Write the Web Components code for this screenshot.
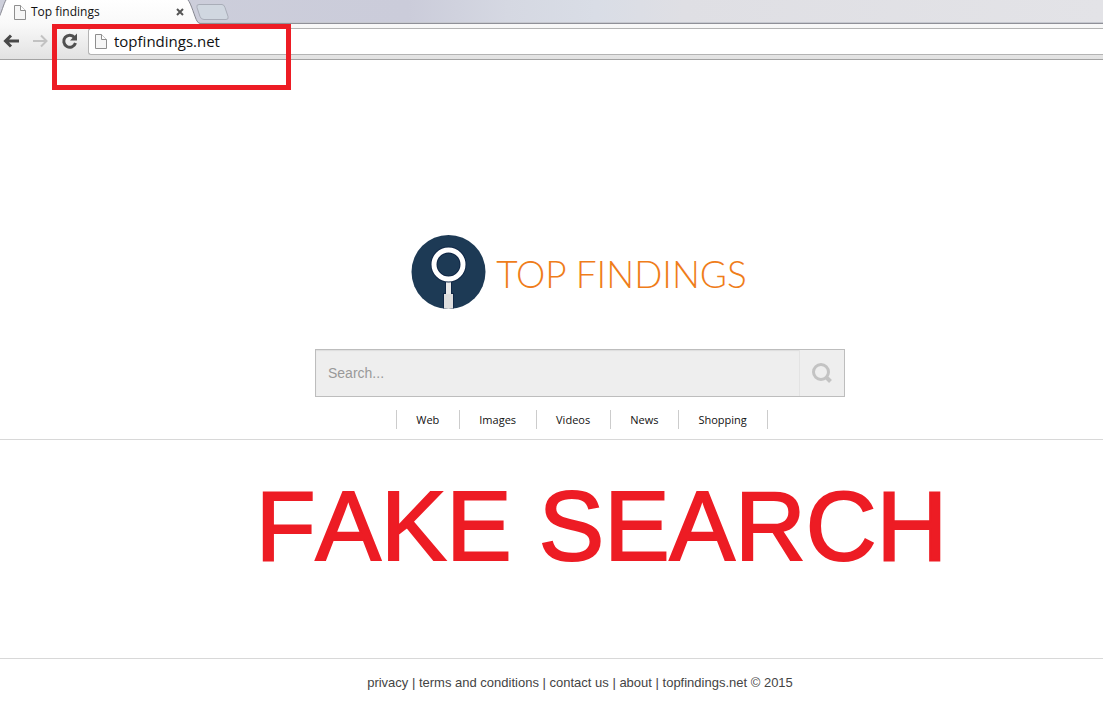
<!DOCTYPE html>
<html lang="en">
<head>
<meta charset="utf-8">
<title>Top findings</title>
<style>
html,body{margin:0;background:#fff}
body{font-family:"Open Sans",sans-serif;color:#111;overflow-x:hidden}
</style>
</head>
<body>
<app-window></app-window>
<script>
const define=(name,html)=>customElements.define(name,class extends HTMLElement{
  constructor(){
    super();
    const t=document.createElement('template');
    t.innerHTML=html;
    this.attachShadow({mode:'open'}).append(t.content.cloneNode(true));
  }
});

define('page-icon',`<style>:host{display:block;width:12px;height:15px}svg{display:block}</style>
<svg width="12" height="15" viewBox="0 0 12 15"><path d="M.5.5h6l5 5v9H.5z" fill="#f6f6f6" stroke="#8e8e8e"/><path d="M6.500.5v5h5" fill="#fff" stroke="#8e8e8e"/></svg>`);

define('tab-strip',`<style>
:host{display:flex;height:24px;background:linear-gradient(90deg,#cdcfdb,#cbccda 37%,#d5d8e2 46%,#d9dde6 54%,#dfdfe4 62%,#e3e3e7);box-shadow:inset 0 -1px #8f9098,inset 0 -2px #c6c8cf}
.tab{display:flex;align-items:center;box-sizing:border-box;width:200px;height:24px;padding:0 15px 0 14px;font-size:12px;line-height:24px;
background:url("data:image/svg+xml,%3Csvg xmlns='http://www.w3.org/2000/svg' width='200' height='24'%3E%3Cdefs%3E%3ClinearGradient id='g' x2='0' y2='1'%3E%3Cstop stop-color='%23fff'/%3E%3Cstop offset='1' stop-color='%23f9f9f9'/%3E%3C/linearGradient%3E%3C/defs%3E%3Cpath d='M-1 24V17C1 14 4 3 6 0H188C191 3 195 18 197 21Q198 23 200 23.500V24Z' fill='url(%23g)'/%3E%3Cpath d='M-1 17C1 14 4 3 6 0M188 0C191 3 195 18 197 21Q198 23 200 23.500' fill='none' stroke='%2385868f'/%3E%3C/svg%3E")}
.title{flex:1;padding-left:5px}
button{border:0;background:none;padding:0;display:block;width:10px;height:10px}
.new{display:block;width:34px;height:18px;margin-top:3px;margin-left:-5px}
svg{display:block}
</style>
<div class="tab"><page-icon></page-icon><span class="title">Top findings</span>
<button aria-label="Close tab"><svg width="10" height="10"><path d="M2 2l6 6M8 2l-6 6" stroke="#555" stroke-width="2"/></svg></button></div>
<button class="new" aria-label="New tab"><svg width="34" height="18"><path d="M4 1.500h23q2 0 3 3l3 9q1 3-2 3H9q-3 0-4-3L2 4.500q-1-3 2-3z" fill="#d0d7e0" stroke="#a9adb8"/></svg></button>`);

define('nav-bar',`<style>
:host{display:flex;align-items:center;box-sizing:border-box;height:36px;padding-bottom:1px;background:linear-gradient(#f9f9f9,#e2e2e2);border-bottom:1px solid #a3a3a3}
button{border:0;padding:0;background:none;display:block;width:18px;height:18px}
.back{margin-left:1px}
.fwd{margin-left:12px}
.re{margin-left:12px}
svg{display:block}
label{flex:1;display:flex;align-items:center;box-sizing:border-box;height:27px;margin-left:9px;padding-left:6px;background:#fff;border:1px solid #b4b4b4;border-right:0;border-radius:3px 0 0 3px}
input{flex:1;min-width:0;border:0;outline:0;background:none;padding:0 0 0 7px;font:15px/20px "Open Sans",sans-serif;color:#111}
</style>
<button class="back" aria-label="Back"><svg width="18" height="18"><path d="M18 9H5M10 3.500L4.500 9l5.500 5.500" fill="none" stroke="#484848" stroke-width="3"/></svg></button>
<button class="fwd" aria-label="Forward"><svg width="18" height="18"><path d="M2 9h13M10 3.500L15.500 9 10 14.500" fill="none" stroke="#c2c2c2" stroke-width="2"/></svg></button>
<button class="re" aria-label="Reload"><svg width="18" height="18"><path d="M13.500 5.500A6 6 0 1 0 14.500 11" fill="none" stroke="#505050" stroke-width="3"/><path d="M16 1.500V8.500H9z" fill="#505050"/></svg></button>
<label><page-icon></page-icon><input aria-label="Address" value="topfindings.net"></label>`);

define('brand-logo',`<style>
:host{display:flex;align-items:center;gap:10px;padding-right:2px;color:#ef7d1a;font:300 37px/44px Lato,sans-serif;white-space:nowrap}
svg{display:block}
h1{font:inherit;margin:0;padding-top:2px}
</style>
<svg width="75" height="75" viewBox="0 0 75 75"><defs><clipPath id="c"><circle cx="37.500" cy="37" r="37"/></clipPath></defs>
<g clip-path="url(#c)"><path d="M0 0h75v75H0z" fill="#1d3a55"/><path d="M34 45h7v13h2v17H32V58h2z" fill="#102746"/><path d="M35 44h5v16h-5z" fill="#e9e9e9"/><path d="M33 59h9v16h-9z" fill="#dedede"/>
<circle cx="37.500" cy="29.500" r="14.500" fill="none" stroke="#102746" stroke-width="7"/><circle cx="37.500" cy="29.500" r="14.500" fill="none" stroke="#fff" stroke-width="5"/></g></svg>
<h1>TOP FINDINGS</h1>`);

define('search-box',`<style>
:host{display:block}
form{display:flex;box-sizing:border-box;height:48px;border:1px solid #bdbdbd;background:#eee;box-shadow:inset 0 1px 1px #ddd}
input{flex:1;min-width:0;border:0;outline:0;background:none;padding:0 12px;font:14px/20px "Liberation Sans",Arial,sans-serif;color:#444}
input::placeholder{color:#999;opacity:1}
button{width:45px;border:0;border-left:1px solid #e3e3e3;background:#eee;padding:0;display:grid;place-items:center}
svg{display:block}
</style>
<form><input type="search" placeholder="Search..." aria-label="Search"><button type="button" aria-label="Search"><svg width="20" height="20"><circle cx="9" cy="9" r="7.500" fill="none" stroke="#c3c3c3" stroke-width="3"/><path d="M13.500 13.500l5 5" stroke="#c3c3c3" stroke-width="4"/></svg></button></form>`);

define('category-nav',`<style>
:host{display:flex;justify-content:center;padding-left:4px}
nav{display:flex;border-left:1px solid #ccc}
::slotted(a){padding:0 20px 0 19px;border-right:1px solid #ccc;font-size:11px;line-height:19px;color:#111;text-decoration:none}
</style><nav><slot></slot></nav>`);

define('site-footer',`<style>
:host{display:block;border-top:1px solid #d8d8d8;padding:15px 0 13px 57px;text-align:center;font:13px/18px "Liberation Sans",Arial,sans-serif;color:#444}
a{color:inherit;text-decoration:none}
</style><a href="#">privacy</a> | <a href="#">terms and conditions</a> | <a href="#">contact us</a> | <a href="#">about</a> | topfindings.net © 2015`);

define('app-window',`<style>
:host{display:block;position:relative}
.mark{position:absolute;left:52px;top:24px;width:239px;height:66px;box-sizing:border-box;border:5px solid #ed1c24;pointer-events:none}
main{display:flex;flex-direction:column;align-items:center;padding:175px 0 10px 57px;border-bottom:1px solid #d8d8d8}
search-box{width:530px;max-width:100%;margin:39px 0 13px}
.note{margin:0;padding:30px 0 76px 100px;text-align:center;font:98px/112px "Liberation Sans",Arial,sans-serif;font-kerning:none;color:#ed1c24;-webkit-text-stroke:2px #ed1c24;white-space:nowrap}
</style>
<tab-strip></tab-strip><nav-bar></nav-bar>
<main><brand-logo></brand-logo><search-box></search-box>
<category-nav><a href="#">Web</a><a href="#">Images</a><a href="#">Videos</a><a href="#">News</a><a href="#">Shopping</a></category-nav></main>
<p class="note">FAKE SEARCH</p>
<site-footer></site-footer>
<div class="mark"></div>`);
</script>
</body>
</html>
